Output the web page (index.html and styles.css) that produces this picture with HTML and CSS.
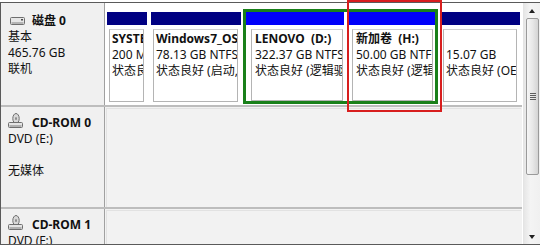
FILE: index.html
```html
<!DOCTYPE html>
<html lang="zh-CN">
<head>
<meta charset="utf-8">
<title>磁盘管理</title>
<link rel="stylesheet" href="styles.css">
</head>
<body>
<div class="frame">
  <div class="list">
    <div class="row row-disk">
      <div class="label label-disk">
        <div class="label-title">
          <svg class="ico-disk" width="16" height="9" viewBox="0 0 16 9">
            <rect x="0.5" y="0.5" width="14" height="7" rx="1" fill="#e6e6e6" stroke="#6e6e6e"/>
            <rect x="1.5" y="5" width="12" height="2" fill="#b4b4b4"/>
            <rect x="11" y="2" width="2" height="1.5" fill="#4a4a4a"/>
          </svg>
          <b>磁盘 0</b>
        </div>
        <div>基本</div>
        <div>465.76 GB</div>
        <div>联机</div>
      </div>
      <div class="parts">
        <div class="part p-sys">
          <div class="bar navy"></div>
          <div class="body"><b>SYSTEM</b><br>200 MB NTFS<br>状态良好 (系统)</div>
        </div>
        <div class="part p-win">
          <div class="bar navy"></div>
          <div class="body"><b>Windows7_OS</b><br>78.13 GB NTFS<br>状态良好 (启动, 页面文件)</div>
        </div>
        <div class="sel">
          <div class="part p-d">
            <div class="bar blue"></div>
            <div class="body body-d"><b>LENOVO&nbsp;&nbsp;(D:)</b><br>322.37 GB NTFS<br>状态良好 (逻辑驱动器)</div>
          </div>
          <div class="part p-h">
            <div class="bar blue"></div>
            <div class="body body-h"><b>新加卷&nbsp;&nbsp;(H:)</b><br>50.00 GB NTFS<br>状态良好 (逻辑驱动器)</div>
          </div>
        </div>
        <div class="part p-oem">
          <div class="bar navy"></div>
          <div class="body"><br>15.07 GB<br>状态良好 (OEM 分区)</div>
        </div>
      </div>
    </div>
    <div class="row row-cd">
      <div class="label label-cd">
        <div class="label-title">
          <svg class="ico-cd" width="16" height="15" viewBox="0 0 16 15">
            <ellipse cx="8" cy="5.5" rx="3.2" ry="5" fill="#d8d8d8" stroke="#6e6e6e"/>
            <ellipse cx="8" cy="5.5" rx="1" ry="1.6" fill="#8a8a8a"/>
            <rect x="0.5" y="9.5" width="14" height="5" rx="1" fill="#e4e4e4" stroke="#6e6e6e"/>
            <rect x="1.5" y="12" width="12" height="2" fill="#b0b0b0"/>
          </svg>
          <b>CD-ROM 0</b>
        </div>
        <div>DVD (E:)</div>
        <div>&nbsp;</div>
        <div>无媒体</div>
      </div>
      <div class="cd-content"><div class="cd-box"></div></div>
    </div>
    <div class="row row-cd row-last">
      <div class="label label-cd">
        <div class="label-title">
          <svg class="ico-cd" width="16" height="15" viewBox="0 0 16 15">
            <ellipse cx="8" cy="5.5" rx="3.2" ry="5" fill="#d8d8d8" stroke="#6e6e6e"/>
            <ellipse cx="8" cy="5.5" rx="1" ry="1.6" fill="#8a8a8a"/>
            <rect x="0.5" y="9.5" width="14" height="5" rx="1" fill="#e4e4e4" stroke="#6e6e6e"/>
            <rect x="1.5" y="12" width="12" height="2" fill="#b0b0b0"/>
          </svg>
          <b>CD-ROM 1</b>
        </div>
        <div>DVD (F:)</div>
      </div>
      <div class="cd-content"><div class="cd-box"></div></div>
    </div>
  </div>
  <div class="scroll">
    <div class="sb-btn"><span class="tri-up"></span></div>
    <div class="thumb"><span class="grip"></span></div>
    <div class="track"></div>
    <div class="sb-btn"><span class="tri-down"></span></div>
  </div>
  <div class="redmark"></div>
</div>
</body>
</html>
```

FILE: styles.css
```css
html, body {
  margin: 0;
  padding: 0;
}
body {
  width: 540px;
  height: 246px;
  overflow: hidden;
  background: #ffffff;
  font-family: "Noto Sans", "Noto Sans CJK SC", sans-serif;
  font-size: 12px;
  color: #111;
}
.frame {
  position: relative;
  margin-top: 2px;
  height: 241px;
  border-top: 1px solid #5a5a5a;
  border-left: 1px solid #5a5a5a;
  border-bottom: 1px solid #5a5a5a;
  display: flex;
}
.list {
  width: 521px;
  display: flex;
  flex-direction: column;
  overflow: hidden;
}
.row {
  display: flex;
  flex-shrink: 0;
  border-bottom: 2px solid #bdbdbd;
}
.row-disk { height: 102px; }
.row-cd { height: 100px; }
.row-last { border-bottom: none; height: 40px; }
.label {
  width: 104px;
  box-sizing: border-box;
  background: #f0f0f0;
  border-right: 1px solid #a0a0a0;
  padding: 8px 0 0 7px;
  line-height: 16px;
  white-space: nowrap;
  overflow: hidden;
}
.label-disk { padding-top: 10px; }
.label-title {
  display: flex;
  align-items: center;
}
.ico-disk { margin: 0 6px 0 2px; }
.ico-cd { margin: -6px 8px 0 0; }
.parts {
  flex: 1;
  display: flex;
  background: #ffffff;
  padding: 6px 0 3px 2px;
}
.part {
  display: flex;
  flex-direction: column;
  margin-top: 3px;
  flex-shrink: 0;
}
.bar { height: 13px; }
.navy { background: #000082; }
.blue { background: #0000fa; }
.body {
  flex: 1;
  margin: 4px 3px 0 2px;
  border: 1px solid #b4b4b4;
  border-top-color: #d0d0d0;
  padding: 1px 0 0 2px;
  line-height: 16px;
  white-space: nowrap;
  overflow: hidden;
}
.body-d {
  margin: 4px 1px 0 5px;
  padding-left: 3px;
}
.body-h {
  margin: 4px 2px 0 3px;
  padding-left: 3px;
}
.p-sys { width: 40px; margin-right: 4px; }
.p-win { width: 90px; margin-right: 2px; }
.sel {
  display: flex;
  border: 3px solid #19801a;
  margin-bottom: -2px;
  margin-right: 3px;
}
.sel .part { margin-top: 0; }
.p-d { width: 98px; margin-right: 5px; }
.p-h { width: 86px; }
.p-oem { width: 79px; }
.cd-content {
  flex: 1;
  background: #f2f2f2;
  display: flex;
  padding: 1px 1px 0 1px;
}
.cd-box {
  flex: 1;
  border-top: 1px solid #e2e2e2;
  border-left: 1px solid #e2e2e2;
}
.scroll {
  width: 17px;
  margin-left: 1px;
  display: flex;
  flex-direction: column;
  background: linear-gradient(to right, #e6e6e6, #f4f4f4 40%, #f0f0f0);
  border-left: 1px solid #e4e4e4;
  box-sizing: border-box;
}
.sb-btn {
  height: 15px;
  display: flex;
  align-items: center;
  justify-content: center;
  flex-shrink: 0;
}
.tri-up, .tri-down {
  width: 0;
  height: 0;
  border-left: 3.5px solid transparent;
  border-right: 3.5px solid transparent;
}
.tri-up { border-bottom: 4px solid #202020; }
.tri-down { border-top: 4px solid #202020; }
.thumb {
  height: 157px;
  margin: 0 1px 0 2px;
  border: 1px solid #9a9a9a;
  border-radius: 2px;
  background: linear-gradient(to right, #f6f6f6, #e8e8e8 50%, #d4d4d4);
  box-sizing: border-box;
  display: flex;
  align-items: center;
  justify-content: center;
  flex-shrink: 0;
}
.grip {
  width: 6px;
  height: 7px;
  background: repeating-linear-gradient(to bottom, #5e5e5e 0, #5e5e5e 1px, transparent 1px, transparent 2px);
}
.track { flex: 1; }
.redmark {
  position: absolute;
  left: 346px;
  top: -3px;
  width: 95px;
  height: 112px;
  box-sizing: border-box;
  border: 2px solid #d81e1e;
  pointer-events: none;
}
```
